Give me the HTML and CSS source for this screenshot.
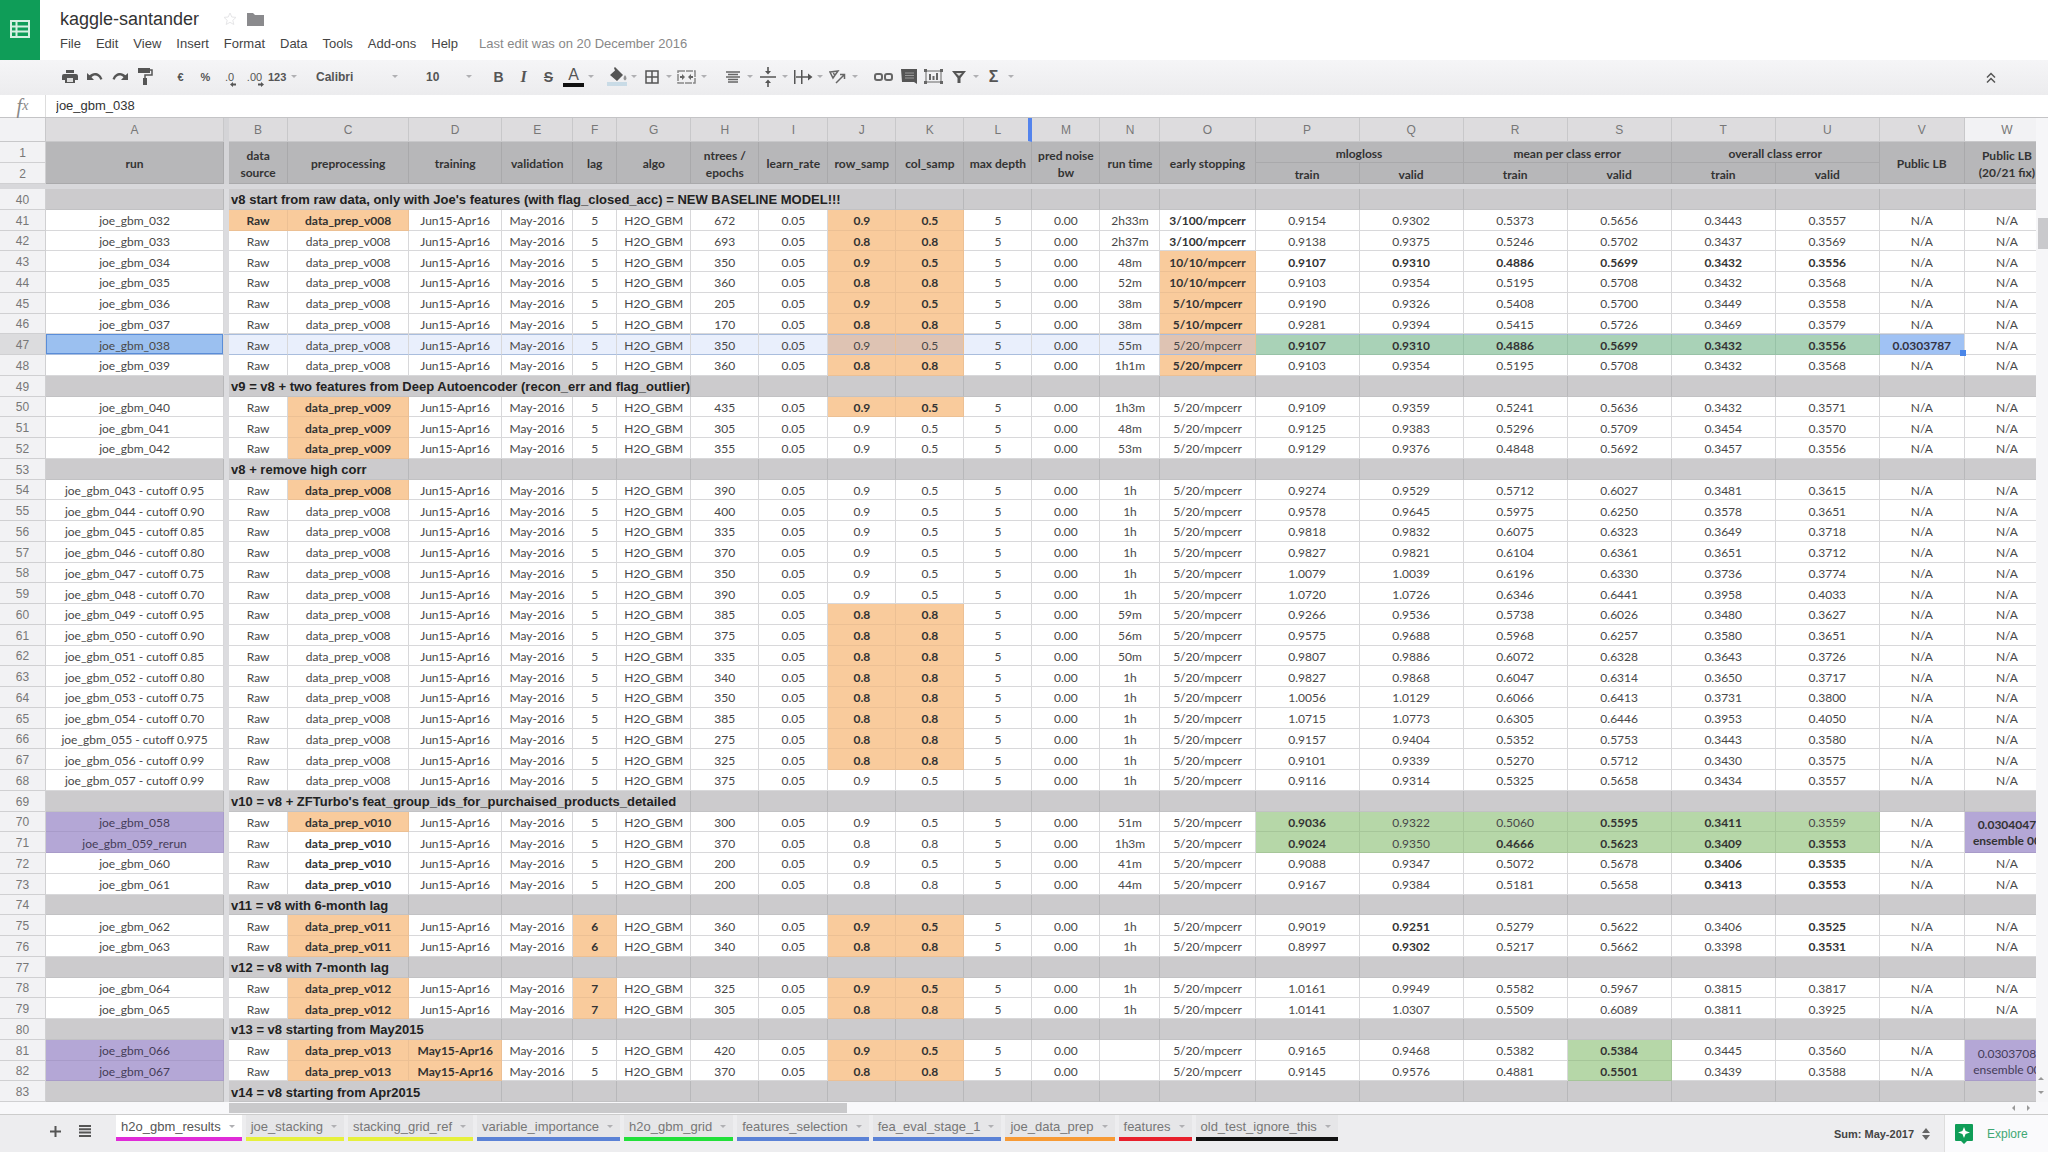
FILE: index.html
```html
<!DOCTYPE html>
<html lang="en">
<head>
<meta charset="utf-8">
<title>kaggle-santander</title>
<link rel="stylesheet" href="styles.css">
</head>
<body>
<div class="app">
  <header class="top">
    <a class="logo" href="#" aria-label="Sheets home">
      <svg width="20" height="18" viewBox="0 0 20 18" fill="none" stroke="#d6f0e2" stroke-width="2"><path d="M1 1h18v16H1zM1 6.500h18M1 11.500h18M6.500 1v16"/></svg>
    </a>
    <div class="heading">
      <div class="title-row">
        <h1>kaggle-santander</h1>
        <button aria-label="Star"><svg width="14" height="14" viewBox="0 0 14 14" fill="none" stroke="#e6e6e8"><path d="M7 1l1.800 4 4.200.4-3.200 2.900 1 4.200L7 10.300l-3.800 2.200 1-4.200L1 5.400 5.200 5z"/></svg></button>
        <button aria-label="Move to folder"><svg width="17" height="14" viewBox="0 0 17 14" fill="#8a8a8d"><path d="M0 1h6l2 2h9v11H0z"/></svg></button>
      </div>
      <nav class="menus">
        <button>File</button><button>Edit</button><button>View</button><button>Insert</button><button>Format</button><button>Data</button><button>Tools</button><button>Add-ons</button><button>Help</button>
        <span class="last-edit">Last edit was on 20 December 2016</span>
      </nav>
    </div>
  </header>

  <div class="toolbar">
    <div class="group">
      <button aria-label="Print"><svg width="16" height="14" viewBox="0 0 16 14"><path fill="#555" d="M4 0h8v3H4zM2 4h12q2 0 2 2v4h-3v3H3v-3H0V6q0-2 2-2z"/><path fill="#ddd" d="M5 8h6v4H5z"/></svg></button>
      <button aria-label="Undo"><svg width="16" height="10" viewBox="0 0 16 10"><path fill="#555" d="M0 1l2.500 2.300C6-.5 13-.2 15.500 7l-2.200.8C11.500 3 7 2.500 4.500 5.300L7 8H0z"/></svg></button>
      <button aria-label="Redo"><svg width="16" height="10" viewBox="0 0 16 10"><path fill="#555" d="M16 1l-2.500 2.300C10-.5 3-.2.500 7l2.200.8C4.500 3 9 2.500 11.500 5.300L9 8h7z"/></svg></button>
      <button aria-label="Paint format"><svg width="16" height="17" viewBox="0 0 16 17"><path fill="#555" d="M1 0h12v5H1z"/><path fill="none" stroke="#555" stroke-width="1.500" d="M13 2h2v5H8v4"/><path fill="#555" d="M6 10h4v7H6z"/></svg></button>
    </div>
    <div class="group numbers">
      <button>€</button><button>%</button>
      <button aria-label="Decrease decimals"><span class="dec">.0</span><svg width="6" height="5" viewBox="0 0 6 5" fill="#555"><path d="M0 2.500L3 0v1.500h3v2H3V5z"/></svg></button>
      <button aria-label="Increase decimals"><span class="dec">.00</span><svg width="6" height="5" viewBox="0 0 6 5" fill="#555"><path d="M6 2.500L3 0v1.500H0v2h3V5z"/></svg></button>
      <button class="wide">123<i class="caret"></i></button>
    </div>
    <label class="combo font"><select aria-label="Font"><option>Calibri</option></select><i class="caret"></i></label>
    <label class="combo size"><select aria-label="Font size"><option>10</option></select><i class="caret"></i></label>
    <div class="group styles">
      <button class="bold">B</button><button class="italic">I</button><button class="strike">S</button>
      <button class="color" aria-label="Text color">A</button><i class="caret"></i>
    </div>
    <div class="group fills">
      <button aria-label="Fill color"><svg width="22" height="19" viewBox="0 0 22 19"><path fill="#555" d="M8 1l1-1 8 8-6 6-7-6 5-4.500z"/><path fill="#555" d="M19 8q3 4 0 5.500Q16 12 19 8z" opacity=".6"/><path fill="#c9dbe6" d="M1 15h20v4H1z"/></svg></button><i class="caret"></i>
      <button aria-label="Borders"><svg width="14" height="14" viewBox="0 0 14 14" fill="none" stroke="#555" stroke-width="1.500"><path d="M1 1h12v12H1zM7 1v12M1 7h12"/></svg></button><i class="caret"></i>
      <button aria-label="Merge cells"><svg width="19" height="14" viewBox="0 0 19 14"><path fill="none" stroke="#888" stroke-width="1.500" stroke-dasharray="7 1" d="M1 1h17v12H1z"/><path fill="#666" d="M3 6h2V4l3 3-3 3V8H3zM16 6h-2V4l-3 3 3 3V8h2z"/></svg></button><i class="caret"></i>
    </div>
    <div class="group">
      <button aria-label="Horizontal align"><svg width="14" height="12" viewBox="0 0 14 12" stroke="#666" stroke-width="1.500"><path d="M0 1h14M2 3.500h10M0 6h14M2 8.500h10M2 11h10"/></svg></button><i class="caret"></i>
      <button aria-label="Vertical align"><svg width="16" height="20" viewBox="0 0 16 20" fill="#555"><path d="M0 9.300h16v1.500H0zM7.200 0h1.600v4H11L8 7.500 5 4h2.200zM7.200 20h1.600v-4H11l-3-3.500L5 16h2.200z"/></svg></button><i class="caret"></i>
      <button aria-label="Text wrapping"><svg width="20" height="14" viewBox="0 0 20 14" fill="#555"><path d="M1 0h1.500v14H1zM8 0h1.500v14H8zM3 6.300h12V3.500L19.500 7 15 10.500V7.800H3z"/></svg></button><i class="caret"></i>
      <button aria-label="Text rotation"><svg width="17" height="15" viewBox="0 0 17 15" fill="none" stroke="#666" stroke-width="1.500"><path d="M1 3l8-1-5 7zM4 3l2 4M7 14l8-8M11 5.500l4.500 0v4.500"/></svg></button><i class="caret"></i>
    </div>
    <div class="group">
      <button aria-label="Insert link"><svg width="19" height="8" viewBox="0 0 19 8" fill="none" stroke="#666" stroke-width="2"><rect x="1" y="1" width="7" height="6" rx="2"/><rect x="11" y="1" width="7" height="6" rx="2"/></svg></button>
      <button aria-label="Insert comment"><svg width="16" height="15" viewBox="0 0 16 15"><path fill="#555" d="M0 0h16v15l-3-2H1z"/><path stroke="#999" d="M4 4h9M4 6.500h9M4 9h9"/></svg></button>
      <button aria-label="Insert chart"><svg width="19" height="15" viewBox="0 0 19 15" fill="none" stroke="#666"><path d="M2 2h15v11H2z"/><path fill="#666" stroke="none" d="M0 0h3v3H0zM16 0h3v3h-3zM0 12h3v3H0zM16 12h3v3h-3zM5 5h2v6H5zM8.500 7h2v4h-2zM12 4h2v7h-2z"/></svg></button>
      <button aria-label="Filter"><svg width="14" height="12" viewBox="0 0 14 12"><path fill="#555" d="M0 0h14L8.500 7v5h-3V7z"/><path fill="#ddd" d="M4 2h6L7 5z"/></svg></button><i class="caret"></i>
      <button class="sigma">Σ</button><i class="caret"></i>
    </div>
    <button class="collapse" aria-label="Hide menus"><svg width="10" height="12" viewBox="0 0 10 12" fill="none" stroke="#555" stroke-width="1.500"><path d="M1 5.500L5 1.500l4 4M1 10.500l4-4 4 4"/></svg></button>
  </div>

  <div class="formula">
    <label for="fx"><em>f</em><small>x</small></label>
    <input id="fx" type="text" value="joe_gbm_038">
  </div>

  <main class="sheet">
    <div class="grid">
      <table>
        <colgroup>
          <col class="c-num"><col class="c-a"><col class="c-gap"><col class="c-b"><col class="c-c"><col class="c-d"><col class="c-e"><col class="c-f"><col class="c-g"><col class="c-m"><col class="c-i"><col class="c-m" span="4"><col class="c-n"><col class="c-o"><col class="c-p" span="6"><col class="c-v"><col class="c-v">
        </colgroup>
        <thead>
          <tr class="letters"><th></th><th>A</th><th class="gap"></th><th>B</th><th>C</th><th>D</th><th>E</th><th>F</th><th>G</th><th>H</th><th>I</th><th>J</th><th>K</th><th class="resizing">L</th><th>M</th><th>N</th><th>O</th><th>P</th><th>Q</th><th>R</th><th>S</th><th>T</th><th>U</th><th>V</th><th class="idle">W</th></tr>
          <tr class="labels"><th class="num">1</th><th rowspan="2">run</th><th class="gap" rowspan="2"></th><th rowspan="2">data<br>source</th><th rowspan="2">preprocessing</th><th rowspan="2">training</th><th rowspan="2">validation</th><th rowspan="2">lag</th><th rowspan="2">algo</th><th rowspan="2">ntrees /<br>epochs</th><th rowspan="2">learn_rate</th><th rowspan="2">row_samp</th><th rowspan="2">col_samp</th><th rowspan="2">max depth</th><th rowspan="2">pred noise<br>bw</th><th rowspan="2">run time</th><th rowspan="2">early stopping</th><th colspan="2">mlogloss</th><th colspan="2">mean per class error</th><th colspan="2">overall class error</th><th rowspan="2">Public LB</th><th rowspan="2">Public LB<br>(20/21 fix)</th></tr>
          <tr class="labels"><th class="num">2</th><th>train</th><th>valid</th><th>train</th><th>valid</th><th>train</th><th>valid</th></tr>
          <tr class="freeze"><td colspan="25"></td></tr>
        </thead>
        <tbody id="rows"></tbody>
      </table>
    </div>
    <div class="vscroll"><div class="vthumb"></div><div class="varrows"><i class="up"></i><i class="down"></i></div></div>
    <div class="hscroll"><div class="hthumb"></div><div class="harrows"><i class="left"></i><i class="right"></i></div></div>
  </main>

  <footer class="bottom">
    <button class="add" aria-label="Add sheet"><svg width="11" height="11" viewBox="0 0 11 11" stroke="#555" stroke-width="2"><path d="M5.500 0v11M0 5.500h11"/></svg></button>
    <button class="all" aria-label="All sheets"><svg width="12" height="12" viewBox="0 0 12 12" stroke="#555" stroke-width="2"><path d="M0 1h12M0 4.300h12M0 7.600h12M0 11h12"/></svg></button>
    <nav class="tabs">
      <button class="tab active magenta">h2o_gbm_results<i class="caret"></i></button>
      <button class="tab yellow">joe_stacking<i class="caret"></i></button>
      <button class="tab yellow">stacking_grid_ref<i class="caret"></i></button>
      <button class="tab blue">variable_importance<i class="caret"></i></button>
      <button class="tab lime">h2o_gbm_grid<i class="caret"></i></button>
      <button class="tab blue">features_selection<i class="caret"></i></button>
      <button class="tab blue">fea_eval_stage_1<i class="caret"></i></button>
      <button class="tab amber">joe_data_prep<i class="caret"></i></button>
      <button class="tab red">features<i class="caret"></i></button>
      <button class="tab black">old_test_ignore_this<i class="caret"></i></button>
    </nav>
    <button class="sum">Sum: May-2017<svg width="8" height="12" viewBox="0 0 8 12" fill="#666"><path d="M4 0l4 5H0zM4 12l4-5H0z"/></svg></button>
    <button class="explore"><svg width="18" height="20" viewBox="0 0 18 20"><path fill="#0f9d58" d="M1 0h16q1 0 1 1v15q0 1-1 1h-5l-3 3-3-3H1q-1 0-1-1V1q0-1 1-1z"/><path fill="#fff" d="M9 3l1.600 4L15 8.500 10.600 10 9 14l-1.600-4L3 8.500 7.400 7z"/></svg>Explore</button>
  </footer>
</div>
<script src="sheet.js"></script>
</body>
</html>
```

FILE: styles.css
```css
* { box-sizing: border-box; }
body { margin: 0; background: #fff; color: #444; font-family: "Liberation Sans", Arial, sans-serif; font-size: 13px; }
button, select, input { border: 0; margin: 0; padding: 0; background: none; color: inherit; font: inherit; }
.app { display: flex; flex-direction: column; height: 100vh; }

.top { display: flex; height: 60px; flex: none; }
.logo { display: flex; align-items: center; justify-content: center; width: 40px; padding-bottom: 2px; background: #0f9d58; }
.heading { display: flex; flex-direction: column; padding: 7px 0 0 20px; }
.title-row { display: flex; align-items: center; height: 24px; gap: 10px; }
h1 { margin: 0 14px 0 0; font-size: 18px; font-weight: 400; line-height: 24px; color: #333; }
.title-row button { display: flex; }
.menus { display: flex; align-items: center; height: 24px; gap: 15px; color: #444; }
.last-edit { padding-left: 6px; color: #888; }

.toolbar { display: flex; align-items: center; height: 35px; flex: none; padding: 0 0 2px 57px; background: linear-gradient(#f5f5f7, #ececee); font-size: 12px; font-weight: 700; color: #555; }
.group { display: flex; align-items: center; margin-right: 11px; }
.group button { display: flex; align-items: center; justify-content: center; width: 25px; height: 24px; }
.group .wide { width: 32px; justify-content: flex-start; gap: 3px; }
.numbers { margin-right: 16px; font-size: 11px; }
.dec { font-weight: 400; }
.numbers svg { align-self: flex-end; margin: 0 0 2px -4px; }
.caret { flex: none; width: 10px; display: flex; justify-content: center; }
.caret::before { content: ""; border: 3px solid transparent; border-top-color: #b0b0b3; border-bottom: 0; }
.combo { display: flex; align-items: center; margin-right: 12px; }
.combo select { flex: 1; width: 0; appearance: none; }
.font { width: 84px; margin-right: 26px; }
.size { width: 48px; }
.styles { margin-right: 8px; font-size: 14px; }
.italic { font-style: italic; font-family: "Liberation Serif", serif; font-size: 16px; }
.strike { text-decoration: line-through; }
.group .color { width: 21px; height: 20px; margin: 0 2px; border-bottom: 4px solid #111; font-weight: 400; font-size: 16px; }
.sigma { font-size: 16px; }
.collapse { display: flex; margin: 2px 52px 0 auto; }

.formula { display: flex; height: 23px; flex: none; border-bottom: 1px solid #c4c4c6; }
.formula label { display: flex; align-items: center; justify-content: center; width: 46px; border-right: 1px solid #ddd; color: #888; font-family: "Liberation Serif", serif; font-size: 20px; font-style: italic; }
.formula small { font-size: 14px; }
.formula input { flex: 1; padding: 0 0 1px 10px; outline: 0; color: #333; }

.sheet { flex: 1; min-height: 0; display: grid; grid-template-columns: minmax(0, 1fr) 12px; grid-template-rows: minmax(0, 1fr) 12px; background: #f6f6f8; }
.grid { overflow: hidden; min-height: 0; }
table { table-layout: fixed; width: 2050px; height: 100%; border-collapse: separate; border-spacing: 0; background: #fff; }
.c-num { width: 46px; } .c-a { width: 178px; } .c-gap { width: 5px; } .c-b { width: 59px; }
.c-c { width: 121px; } .c-d { width: 93px; } .c-e { width: 71px; } .c-f { width: 44px; }
.c-g { width: 74px; } .c-m { width: 68px; } .c-i { width: 69px; } .c-n { width: 60px; }
.c-o { width: 95px; } .c-p { width: 104px; } .c-v { width: 85px; }
th, td { padding: 0; text-align: center; white-space: nowrap; border: solid #d8d8da; border-width: 0 1px 1px 0; overflow: hidden; }
.letters th { height: 24px; padding-top: 1px; background: #dddcde; border-color: #c8c8ca; font-size: 12px; font-weight: 400; color: #777; }
.letters th:first-child, .letters .idle { background: #f2f2f4; }
.letters .resizing { border-right: 4px solid #5484ed; padding-left: 3px; }
.labels th { height: 21px; padding-top: 2px; background: #b7b7b9; border-color: #a9a9ab; font: 700 12px/17px Lato, sans-serif; color: #333; }
.letters .gap, .labels .gap, .gap { background: #d4d4d7; border: 0; }
th.num, .labels .num { padding-top: 2px; background: #f2f2f4; border-color: #d0d0d2; font: 400 12px/16px "Liberation Sans", Arial, sans-serif; color: #777; }
.freeze td { height: 5px; background: #d8d8db; border: 0; font-size: 0; }
tbody td { padding-top: 3px; font: 400 12px/16px Lato, sans-serif; color: #484848; }
tbody tr.section td { background: #cccbcd; border-right-color: #b8b8ba; border-bottom-color: #c2c2c4; }
tbody tr.section .head { padding-left: 2px; text-align: left; font: 700 13px/16px "Liberation Sans", Arial, sans-serif; color: #222; }
tbody tr td.gap, tbody tr.section td.gap { background: #dcdcdf; border: 0; }
tbody .b { font-weight: 700; color: #333; }
.orange { background: #f9cb9c; border-color: #ecc094; }
.green { background: #b6d7a8; border-color: #a6c699; }
.purple { background: #b4a7d6; border-color: #a89bc9; color: #443c58; }
.selected td { background: #e9effc; border-bottom-color: #a9bddd; box-shadow: inset 0 1px #a9bddd; }
.selected .num { background: #dcdcde; }
.selected .orange { background: #dec3b3; }
.selected .green { background: #a9d2b7; border-color: #98c2a7; }
.selected .active { background: #9bc0f0; box-shadow: inset 0 0 0 1px #5a8dd8; }
.selected .tail { position: relative; background: #a0c2f4; color: #334; overflow: visible; }
.tail::after { content: ""; position: absolute; right: -2px; bottom: -2px; width: 6px; height: 6px; background: #4a86e8; }
.selected td:last-child { background: #fff; box-shadow: none; border-color: #d8d8da; }

.vscroll { display: flex; flex-direction: column; align-items: flex-end; background: #f6f6f8; padding-top: 100px; }
.vthumb { width: 10px; height: 31px; background: #c9c9cc; }
.varrows { display: flex; flex-direction: column; gap: 11px; margin: auto 4px 8px 0; }
.hscroll { grid-column: 1 / -1; display: flex; align-items: center; background: #f8f8fa; padding-left: 229px; }
.hthumb { width: 618px; height: 10px; background: #c9c9cb; }
.harrows { display: flex; gap: 12px; margin: 0 18px 0 auto; }
.up, .down, .left, .right { border: 3px solid transparent; }
.up { border-top: 0; border-bottom-color: #999; }
.down { border-bottom: 0; border-top-color: #999; }
.left { border-left: 0; border-right-color: #999; }
.right { border-right: 0; border-left-color: #999; }

.bottom { display: flex; height: 38px; flex: none; background: #ededef; border-top: 1px solid #ccc; }
.add, .all { display: flex; align-items: center; justify-content: center; width: 30px; padding-bottom: 5px; }
.add { margin-left: 40px; }
.tabs { display: flex; flex: 1; gap: 4px; align-items: flex-start; margin-left: 16px; min-width: 0; }
.tab { display: flex; align-items: center; gap: 6px; height: 26px; padding: 0 5px; border-bottom: 4px solid; color: #777; background: #e6e6e8; white-space: nowrap; }
.tab.active { color: #555; background: #fff; }
.magenta { border-color: #e02bd8; } .yellow { border-color: #e6f03c; } .blue { border-color: #5b82d6; }
.lime { border-color: #22e03a; } .amber { border-color: #f79a35; } .red { border-color: #e8202c; } .black { border-color: #111; }
.sum { display: flex; align-items: center; gap: 8px; padding: 0 14px; font-size: 11px; font-weight: 700; color: #444; }
.explore { display: flex; align-items: center; gap: 14px; width: 104px; padding-left: 10px; background: #fafafc; border-left: 1px solid #ddd; color: #3fa873; font-size: 12px; }
```

FILE: sheet.js
```js
// Marks in front of a value: * bold, ! bold on orange, ? plain on orange, ~ green, @ purple.
// Data rows: number|run|source|preprocessing|training|lag|ntrees|row|col|time|stopping|P..U
// Section rows: number#title#columns covered by the title
const lines = `
40#v8 start from raw data, only with Joe's features (with flag_closed_acc) = NEW BASELINE MODEL!!!#9
41|joe_gbm_032|!Raw|!data_prep_v008|Jun15-Apr16|5|672|!0.9|!0.5|2h33m|*3/100/mpcerr|0.9154|0.9302|0.5373|0.5656|0.3443|0.3557
42|joe_gbm_033|Raw|data_prep_v008|Jun15-Apr16|5|693|!0.8|!0.8|2h37m|*3/100/mpcerr|0.9138|0.9375|0.5246|0.5702|0.3437|0.3569
43|joe_gbm_034|Raw|data_prep_v008|Jun15-Apr16|5|350|!0.9|!0.5|48m|!10/10/mpcerr|*0.9107|*0.9310|*0.4886|*0.5699|*0.3432|*0.3556
44|joe_gbm_035|Raw|data_prep_v008|Jun15-Apr16|5|360|!0.8|!0.8|52m|!10/10/mpcerr|0.9103|0.9354|0.5195|0.5708|0.3432|0.3568
45|joe_gbm_036|Raw|data_prep_v008|Jun15-Apr16|5|205|!0.9|!0.5|38m|!5/10/mpcerr|0.9190|0.9326|0.5408|0.5700|0.3449|0.3558
46|joe_gbm_037|Raw|data_prep_v008|Jun15-Apr16|5|170|!0.8|!0.8|38m|!5/10/mpcerr|0.9281|0.9394|0.5415|0.5726|0.3469|0.3579
47|joe_gbm_038|Raw|data_prep_v008|Jun15-Apr16|5|350|?0.9|?0.5|55m|?5/20/mpcerr|~*0.9107|~*0.9310|~*0.4886|~*0.5699|~*0.3432|~*0.3556
48|joe_gbm_039|Raw|data_prep_v008|Jun15-Apr16|5|360|!0.8|!0.8|1h1m|!5/20/mpcerr|0.9103|0.9354|0.5195|0.5708|0.3432|0.3568
49#v9 = v8 + two features from Deep Autoencoder (recon_err and flag_outlier)#6
50|joe_gbm_040|Raw|!data_prep_v009|Jun15-Apr16|5|435|!0.9|!0.5|1h3m|5/20/mpcerr|0.9109|0.9359|0.5241|0.5636|0.3432|0.3571
51|joe_gbm_041|Raw|!data_prep_v009|Jun15-Apr16|5|305|0.9|0.5|48m|5/20/mpcerr|0.9125|0.9383|0.5296|0.5709|0.3454|0.3570
52|joe_gbm_042|Raw|!data_prep_v009|Jun15-Apr16|5|355|0.9|0.5|53m|5/20/mpcerr|0.9129|0.9376|0.4848|0.5692|0.3457|0.3556
53#v8 + remove high corr#2
54|joe_gbm_043 - cutoff 0.95|Raw|!data_prep_v008|Jun15-Apr16|5|390|0.9|0.5|1h|5/20/mpcerr|0.9274|0.9529|0.5712|0.6027|0.3481|0.3615
55|joe_gbm_044 - cutoff 0.90|Raw|data_prep_v008|Jun15-Apr16|5|400|0.9|0.5|1h|5/20/mpcerr|0.9578|0.9645|0.5975|0.6250|0.3578|0.3651
56|joe_gbm_045 - cutoff 0.85|Raw|data_prep_v008|Jun15-Apr16|5|335|0.9|0.5|1h|5/20/mpcerr|0.9818|0.9832|0.6075|0.6323|0.3649|0.3718
57|joe_gbm_046 - cutoff 0.80|Raw|data_prep_v008|Jun15-Apr16|5|370|0.9|0.5|1h|5/20/mpcerr|0.9827|0.9821|0.6104|0.6361|0.3651|0.3712
58|joe_gbm_047 - cutoff 0.75|Raw|data_prep_v008|Jun15-Apr16|5|350|0.9|0.5|1h|5/20/mpcerr|1.0079|1.0039|0.6196|0.6330|0.3736|0.3774
59|joe_gbm_048 - cutoff 0.70|Raw|data_prep_v008|Jun15-Apr16|5|390|0.9|0.5|1h|5/20/mpcerr|1.0720|1.0726|0.6346|0.6441|0.3958|0.4033
60|joe_gbm_049 - cutoff 0.95|Raw|data_prep_v008|Jun15-Apr16|5|385|!0.8|!0.8|59m|5/20/mpcerr|0.9266|0.9536|0.5738|0.6026|0.3480|0.3627
61|joe_gbm_050 - cutoff 0.90|Raw|data_prep_v008|Jun15-Apr16|5|375|!0.8|!0.8|56m|5/20/mpcerr|0.9575|0.9688|0.5968|0.6257|0.3580|0.3651
62|joe_gbm_051 - cutoff 0.85|Raw|data_prep_v008|Jun15-Apr16|5|335|!0.8|!0.8|50m|5/20/mpcerr|0.9807|0.9886|0.6072|0.6328|0.3643|0.3726
63|joe_gbm_052 - cutoff 0.80|Raw|data_prep_v008|Jun15-Apr16|5|340|!0.8|!0.8|1h|5/20/mpcerr|0.9827|0.9868|0.6047|0.6314|0.3650|0.3717
64|joe_gbm_053 - cutoff 0.75|Raw|data_prep_v008|Jun15-Apr16|5|350|!0.8|!0.8|1h|5/20/mpcerr|1.0056|1.0129|0.6066|0.6413|0.3731|0.3800
65|joe_gbm_054 - cutoff 0.70|Raw|data_prep_v008|Jun15-Apr16|5|385|!0.8|!0.8|1h|5/20/mpcerr|1.0715|1.0773|0.6305|0.6446|0.3953|0.4050
66|joe_gbm_055 - cutoff 0.975|Raw|data_prep_v008|Jun15-Apr16|5|275|!0.8|!0.8|1h|5/20/mpcerr|0.9157|0.9404|0.5352|0.5753|0.3443|0.3580
67|joe_gbm_056 - cutoff 0.99|Raw|data_prep_v008|Jun15-Apr16|5|325|!0.8|!0.8|1h|5/20/mpcerr|0.9101|0.9339|0.5270|0.5712|0.3430|0.3575
68|joe_gbm_057 - cutoff 0.99|Raw|data_prep_v008|Jun15-Apr16|5|375|0.9|0.5|1h|5/20/mpcerr|0.9116|0.9314|0.5325|0.5658|0.3434|0.3557
69#v10 = v8 + ZFTurbo's feat_group_ids_for_purchaised_products_detailed#6
70|@joe_gbm_058|Raw|!data_prep_v010|Jun15-Apr16|5|300|0.9|0.5|51m|5/20/mpcerr|~*0.9036|~0.9322|~0.5060|~*0.5595|~*0.3411|~0.3559
71|@joe_gbm_059_rerun|Raw|*data_prep_v010|Jun15-Apr16|5|370|0.8|0.8|1h3m|5/20/mpcerr|~*0.9024|~0.9350|~*0.4666|~*0.5623|~*0.3409|~*0.3553
72|joe_gbm_060|Raw|*data_prep_v010|Jun15-Apr16|5|200|0.9|0.5|41m|5/20/mpcerr|0.9088|0.9347|0.5072|0.5678|*0.3406|*0.3535
73|joe_gbm_061|Raw|*data_prep_v010|Jun15-Apr16|5|200|0.8|0.8|44m|5/20/mpcerr|0.9167|0.9384|0.5181|0.5658|*0.3413|*0.3553
74#v11 = v8 with 6-month lag#2
75|joe_gbm_062|Raw|!data_prep_v011|Jun15-Apr16|!6|360|!0.9|!0.5|1h|5/20/mpcerr|0.9019|*0.9251|0.5279|0.5622|0.3406|*0.3525
76|joe_gbm_063|Raw|!data_prep_v011|Jun15-Apr16|!6|340|!0.8|!0.8|1h|5/20/mpcerr|0.8997|*0.9302|0.5217|0.5662|0.3398|*0.3531
77#v12 = v8 with 7-month lag#2
78|joe_gbm_064|Raw|!data_prep_v012|Jun15-Apr16|!7|325|!0.9|!0.5|1h|5/20/mpcerr|1.0161|0.9949|0.5582|0.5967|0.3815|0.3817
79|joe_gbm_065|Raw|!data_prep_v012|Jun15-Apr16|!7|305|!0.8|!0.8|1h|5/20/mpcerr|1.0141|1.0307|0.5509|0.6089|0.3811|0.3925
80#v13 = v8 starting from May2015#3
81|@joe_gbm_066|Raw|!data_prep_v013|!May15-Apr16|5|420|!0.9|!0.5||5/20/mpcerr|0.9165|0.9468|0.5382|~*0.5384|0.3445|0.3560
82|@joe_gbm_067|Raw|!data_prep_v013|!May15-Apr16|5|370|!0.8|!0.8||5/20/mpcerr|0.9145|0.9576|0.4881|~*0.5501|0.3439|0.3588
83#v14 = v8 starting from Apr2015#3`.trim().split('\n');

const marks = { '*': 'b', '!': 'b orange', '?': 'orange', '~': 'green', '@': 'purple' };

function cell(value, extra) {
  const classes = extra ? [extra] : [];
  while (marks[value[0]]) {
    classes.push(marks[value[0]]);
    value = value.slice(1);
  }
  return `<td class="${classes.join(' ')}">${value}</td>`;
}

const gap = '<td class="gap"></td>';
const publicFix = {
  70: '<td class="purple b" rowspan="2">0.0304047<br>ensemble 00</td>', 71: '',
  81: '<td class="purple" rowspan="2">0.0303708<br>ensemble 00</td>', 82: ''
};

document.getElementById('rows').innerHTML = lines.map(line => {
  if (line.includes('#')) {
    const [n, title, span] = line.split('#');
    return `<tr class="section"><th class="num">${n}</th><td></td>${gap}<td class="head" colspan="${span}">${title}</td>${'<td></td>'.repeat(22 - span)}</tr>`;
  }
  const [n, run, source, prep, training, lag, trees, row, col, time, stop, ...scores] = line.split('|');
  const selected = n === '47';
  return `<tr${selected ? ' class="selected"' : ''}><th class="num">${n}</th>` +
    cell(run, selected ? 'active' : '') + gap + cell(source) + cell(prep) + cell(training) +
    cell('May-2016') + cell(lag) + cell('H2O_GBM') + cell(trees) + cell('0.05') + cell(row) + cell(col) +
    cell('5') + cell('0.00') + cell(time) + cell(stop) + scores.map(s => cell(s)).join('') +
    (selected ? cell('*0.0303787', 'tail') : cell('N/A')) +
    (n in publicFix ? publicFix[n] : cell('N/A')) + '</tr>';
}).join('');
```
